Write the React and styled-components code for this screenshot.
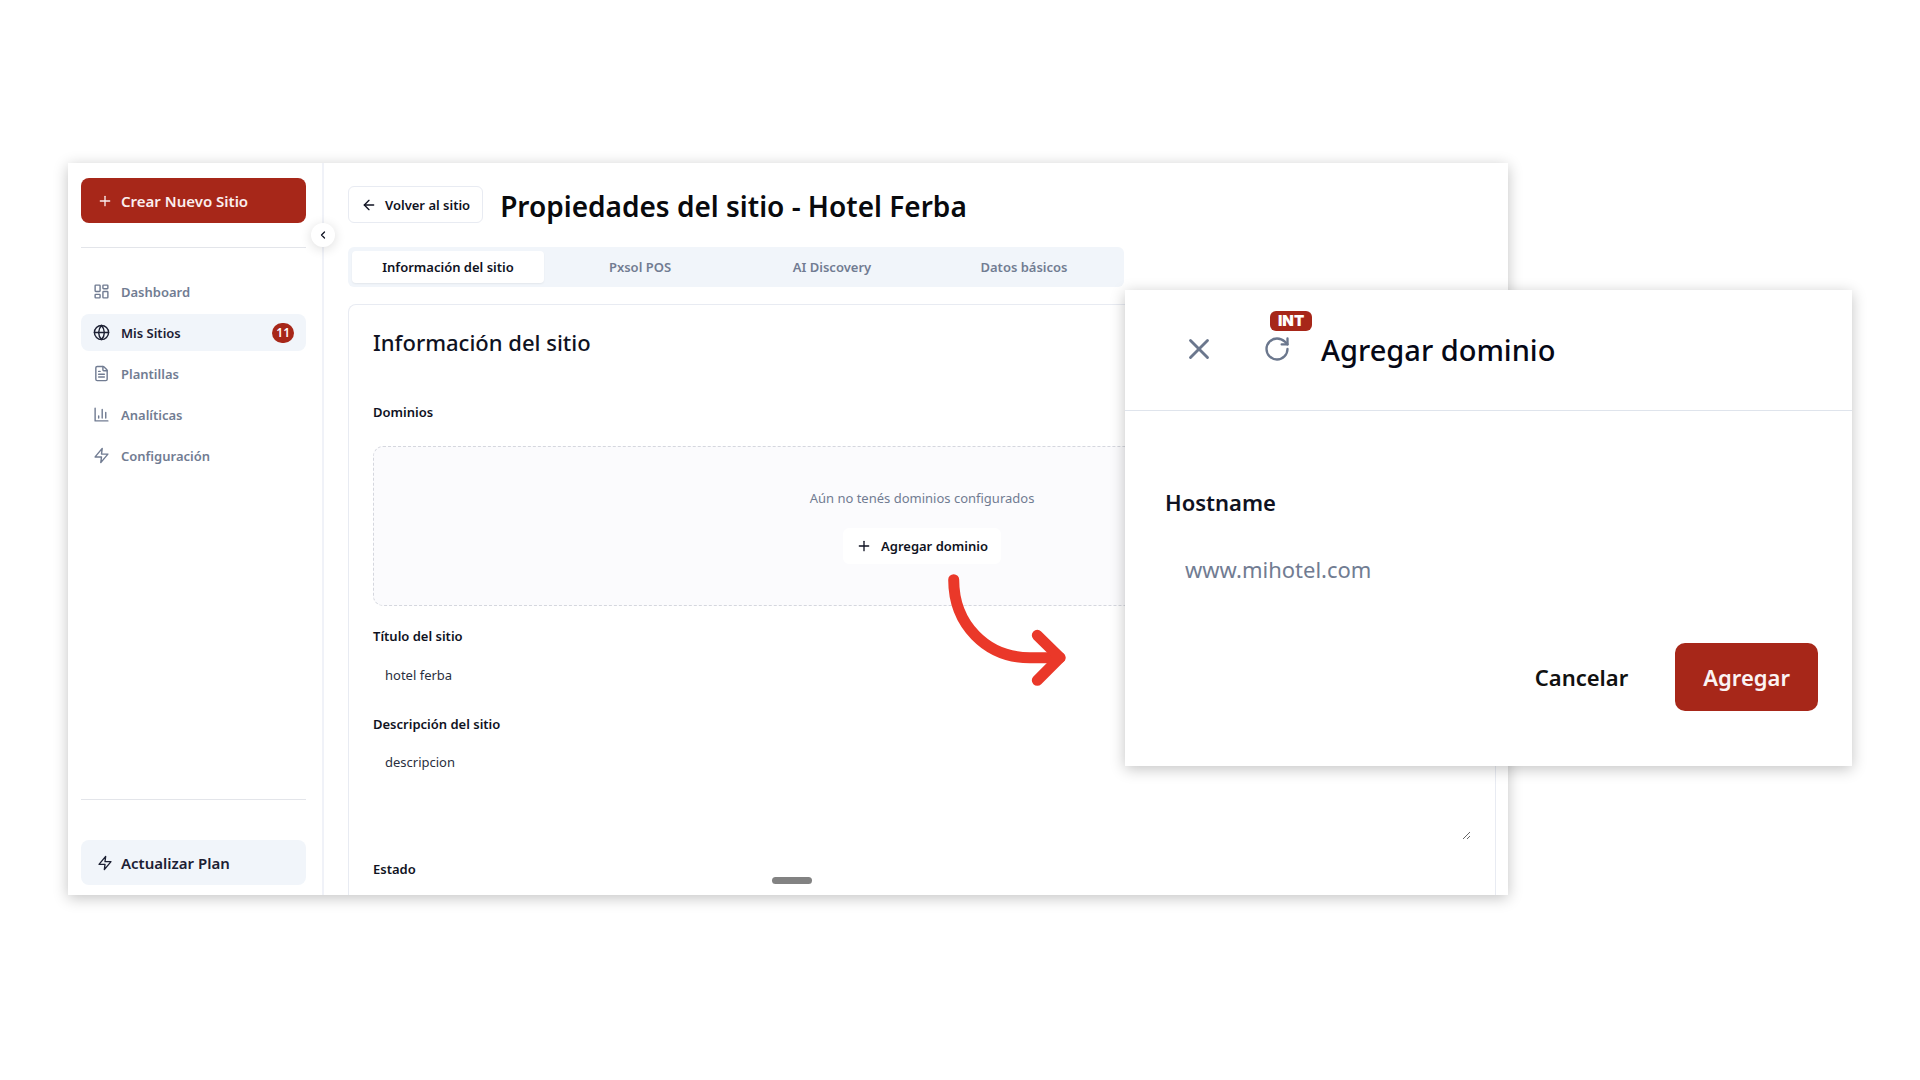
import React from "react";
import styled, { createGlobalStyle, css } from "styled-components";
import { ArrowLeft, ChevronLeft, FileText, Globe, LayoutDashboard, Plus, RotateCw, X } from "lucide-react";

const color = {
  brand: "#a72719",
  ink: "#0f1222",
  muted: "#717c92",
  soft: "#f1f5fa",
  line: "#e8ebf2",
  arrow: "#ea3829",
};

const GlobalStyle = createGlobalStyle`
  *, *::before, *::after { box-sizing: border-box; }
  body {
    margin: 0;
    background: #fff;
    color: ${color.ink};
    font: 400 13px/20px "Noto Sans", "Open Sans", sans-serif;
  }
  button, input, textarea { font: inherit; color: inherit; }
  button { cursor: pointer; }
`;

const Stage = styled.div`
  position: relative;
  min-height: 100vh;
  padding: 163px 68px;
`;

const floating = css`
  background: #fff;
  box-shadow: 0 3px 14px rgba(0, 0, 0, 0.24);
`;

const Window = styled.section`
  ${floating}
  position: relative;
  display: grid;
  grid-template-columns: 256px minmax(0, 1fr);
  width: 75vw;
  min-height: 732px;
`;

const Sidebar = styled.aside`
  position: relative;
  display: flex;
  flex-direction: column;
  padding: 15px 16px 10px 13px;
  border-right: 2px solid #f0f2f8;
`;

const SideButton = styled.button`
  display: flex;
  align-items: center;
  gap: 8px;
  height: 45px;
  padding: 0 16px;
  border: 0;
  border-radius: 8px;
  background: ${(p) => (p.$primary ? color.brand : color.soft)};
  color: ${(p) => (p.$primary ? "#fbeeee" : "#1c2033")};
  font-size: 15px;
  font-weight: 600;
`;

const Rule = styled.hr`
  width: 100%;
  margin: 0;
  border: 0;
  border-top: 1px solid #e3e5ea;
`;

const TopRule = styled(Rule)`
  margin: 24px 0 25px;
`;

const BottomRule = styled(Rule)`
  margin: auto 0 40px;
`;

const Nav = styled.nav`
  display: flex;
  flex-direction: column;
  gap: 4px;
`;

const NavLink = styled.a`
  display: flex;
  align-items: center;
  gap: 11px;
  height: 37px;
  padding: 0 12px;
  border-radius: 8px;
  background: ${(p) => (p.$active ? color.soft : "transparent")};
  color: ${(p) => (p.$active ? "#1c2033" : color.muted)};
  font-weight: 600;
  text-decoration: none;
`;

const Count = styled.span`
  margin-left: auto;
  padding: 0 4px;
  border-radius: 10px;
  background: ${color.brand};
  color: #fff;
  font-size: 12px;
`;

const Collapse = styled.button`
  position: absolute;
  top: 60px;
  right: -13px;
  display: grid;
  place-items: center;
  width: 24px;
  height: 24px;
  padding: 0;
  border: 0;
  border-radius: 50%;
  background: #fff;
  box-shadow: 0 2px 12px rgba(0, 0, 0, 0.14);
`;

const Main = styled.main`
  display: flex;
  flex-direction: column;
  padding: 23px 12px 0 24px;
`;

const PageHeader = styled.header`
  display: flex;
  align-items: center;
  gap: 17px;
`;

const BackButton = styled.button`
  display: flex;
  align-items: center;
  gap: 8px;
  height: 37px;
  padding: 0 12px;
  border: 1px solid ${color.line};
  border-radius: 6px;
  background: #fff;
  font-weight: 600;
`;

const PageTitle = styled.h1`
  margin: 0;
  padding-top: 4px;
  color: #090a0d;
  font-size: 28px;
  font-weight: 600;
  line-height: 33px;
`;

const Tabs = styled.div`
  display: grid;
  grid-template-columns: repeat(4, 1fr);
  width: 100%;
  max-width: 776px;
  margin: 24px 0 17px;
  padding: 4px;
  border-radius: 6px;
  background: ${color.soft};
`;

const Tab = styled.button`
  height: 32px;
  padding: 0;
  border: 0;
  border-radius: 4px;
  background: ${(p) => (p.$active ? "#fff" : "transparent")};
  box-shadow: ${(p) => (p.$active ? "0 1px 2px rgba(0, 0, 0, 0.06)" : "none")};
  color: ${(p) => (p.$active ? color.ink : color.muted)};
  font-weight: 600;
`;

const Card = styled.section`
  flex: 1;
  padding: 23px 24px 15px;
  border: 1px solid ${color.line};
  border-bottom: 0;
  border-radius: 8px 8px 0 0;
`;

const CardTitle = styled.h2`
  margin: 0 0 46px;
  font-size: 22px;
  font-weight: 500;
  line-height: 28px;
`;

const GroupTitle = styled.h3`
  margin: 0;
  font-size: 13px;
  font-weight: 600;
  line-height: 20px;
`;

const EmptyDomains = styled.div`
  display: flex;
  flex-direction: column;
  align-items: center;
  gap: 19px;
  margin: 24px 0 20px;
  padding: 41px;
  border: 1px dashed #d5d7de;
  border-radius: 10px;
  background: #fbfbfd;
`;

const EmptyText = styled.p`
  margin: 0;
  color: ${color.muted};
  line-height: 21px;
`;

const AddDomain = styled.div`
  position: relative;
`;

const AddButton = styled.button`
  display: flex;
  align-items: center;
  gap: 9px;
  height: 36px;
  padding: 0 13px;
  border: 0;
  border-radius: 6px;
  background: #fff;
  font-weight: 600;
`;

const Pointer = styled.svg`
  position: absolute;
  top: 46px;
  left: 105px;
  z-index: 1;
  pointer-events: none;
`;

const Field = styled.div`
  display: flex;
  flex-direction: column;
  gap: 9px;
  margin-bottom: 19px;
`;

const Label = styled.label`
  font-weight: 600;
`;

const TextInput = styled.input`
  height: 40px;
  padding: 0 12px;
  border: 0;
  background: #fff;
  color: #2a2f40;
`;

const TextArea = styled.textarea`
  height: 97px;
  padding: 9px 12px;
  border: 0;
  background: #fff;
  color: #2a2f40;
  resize: vertical;
`;

const DragHandle = styled.span`
  position: absolute;
  bottom: 11px;
  left: 50%;
  width: 40px;
  height: 7px;
  margin-left: -16px;
  border-radius: 4px;
  background: #828282;
`;

const Dialog = styled.section`
  ${floating}
  position: absolute;
  top: 290px;
  right: 68px;
  z-index: 2;
  width: 727px;
  max-width: calc(100vw - 136px);
`;

const DialogHeader = styled.header`
  display: flex;
  align-items: center;
  height: 121px;
  padding: 0 57px;
  border-bottom: 1px solid #dfe4ec;
`;

const IconButton = styled.button`
  position: relative;
  display: grid;
  place-items: center;
  width: 34px;
  height: 34px;
  margin: 0 ${(p) => p.$space} 3px 0;
  padding: 0;
  border: 0;
  background: transparent;
  color: #6b778d;
`;

const Tag = styled.span`
  position: absolute;
  top: -21px;
  left: 10px;
  padding: 0 8px;
  border-radius: 6px;
  background: ${color.brand};
  color: #fff;
  font-family: Inter, "Noto Sans", sans-serif;
  font-size: 15px;
  font-weight: 900;
`;

const DialogTitle = styled.h2`
  margin: 0;
  color: #060816;
  font-size: 29px;
  font-weight: 500;
  line-height: 40px;
`;

const DialogForm = styled.form`
  display: flex;
  flex-direction: column;
  padding: 75px 34px 55px 40px;
  font-size: 22px;
  line-height: 32px;
`;

const HostInput = styled.input`
  height: 56px;
  margin: 23px 0 46px;
  padding: 0 20px;
  border: 0;
  background: #fff;
  &::placeholder { color: ${color.muted}; opacity: 1; }
`;

const Actions = styled.div`
  display: flex;
  justify-content: flex-end;
  gap: 19px;
`;

const DialogButton = styled.button`
  height: 68px;
  padding: 0 28px;
  border: 0;
  border-radius: 10px;
  background: ${(p) => (p.$primary ? color.brand : "transparent")};
  color: ${(p) => (p.$primary ? "#fbf3f3" : "#111")};
  font-weight: 600;
`;

const Stroke = styled.svg.attrs({ viewBox: "0 0 24 24", fill: "none", "aria-hidden": true })`
  width: ${(p) => p.$size}px;
  height: ${(p) => p.$size}px;
  stroke: currentColor;
  stroke-width: 2;
  stroke-linecap: round;
  stroke-linejoin: round;
`;

const Bolt = ({ size }) => (
  <Stroke $size={size}>
    <polygon points="13 2 3 14 12 14 11 22 21 10 12 10 13 2" />
  </Stroke>
);

const Bars = ({ size }) => (
  <Stroke $size={size}>
    <path d="M3 3v18h18M18 17V9M13 17V5M8 17v-3" />
  </Stroke>
);

const navItems = [
  { label: "Dashboard", Icon: LayoutDashboard },
  { label: "Mis Sitios", Icon: Globe, count: 11 },
  { label: "Plantillas", Icon: FileText },
  { label: "Analíticas", Icon: Bars },
  { label: "Configuración", Icon: Bolt },
];

const tabs = ["Información del sitio", "Pxsol POS", "AI Discovery", "Datos básicos"];

export default function App() {
  return (
    <Stage>
      <GlobalStyle />
      <Window>
        <Sidebar>
          <SideButton $primary type="button">
            <Plus size={16} strokeWidth={2} />
            Crear Nuevo Sitio
          </SideButton>
          <TopRule />
          <Nav>
            {navItems.map(({ label, Icon, count }) => (
              <NavLink key={label} href="#" $active={Boolean(count)}>
                <Icon size={17} strokeWidth={2} />
                {label}
                {count && <Count>{count}</Count>}
              </NavLink>
            ))}
          </Nav>
          <BottomRule />
          <SideButton type="button">
            <Bolt size={16} />
            Actualizar Plan
          </SideButton>
          <Collapse type="button" aria-label="Contraer menú">
            <ChevronLeft size={12} strokeWidth={2.5} />
          </Collapse>
        </Sidebar>
        <Main>
          <PageHeader>
            <BackButton type="button">
              <ArrowLeft size={16} strokeWidth={2} />
              Volver al sitio
            </BackButton>
            <PageTitle>Propiedades del sitio - Hotel Ferba</PageTitle>
          </PageHeader>
          <Tabs role="tablist">
            {tabs.map((name, i) => (
              <Tab key={name} type="button" role="tab" aria-selected={i === 0} $active={i === 0}>
                {name}
              </Tab>
            ))}
          </Tabs>
          <Card>
            <CardTitle>Información del sitio</CardTitle>
            <GroupTitle>Dominios</GroupTitle>
            <EmptyDomains>
              <EmptyText>Aún no tenés dominios configurados</EmptyText>
              <AddDomain>
                <AddButton type="button">
                  <Plus size={16} strokeWidth={2} />
                  Agregar dominio
                </AddButton>
                <Pointer
                  width="120"
                  height="114"
                  viewBox="0 0 120 114"
                  fill="none"
                  stroke={color.arrow}
                  strokeWidth="11"
                  strokeLinecap="round"
                  strokeLinejoin="round"
                  aria-hidden="true"
                >
                  <path d="M5.7 5.7C5.7 50 38 83.7 82 83.7H112" />
                  <path d="M89.3 61.3L112 83.7L89.3 106.3" />
                </Pointer>
              </AddDomain>
            </EmptyDomains>
            <Field>
              <Label htmlFor="site-title">Título del sitio</Label>
              <TextInput id="site-title" defaultValue="hotel ferba" />
            </Field>
            <Field>
              <Label htmlFor="site-description">Descripción del sitio</Label>
              <TextArea id="site-description" defaultValue="descripcion" />
            </Field>
            <GroupTitle>Estado</GroupTitle>
          </Card>
        </Main>
        <DragHandle />
      </Window>
      <Dialog role="dialog" aria-labelledby="dialog-title">
        <DialogHeader>
          <IconButton type="button" aria-label="Cerrar" $space="44px">
            <X size={34} strokeWidth={2} />
          </IconButton>
          <IconButton type="button" aria-label="Recargar" $space="27px">
            <RotateCw size={28} strokeWidth={2} />
            <Tag>INT</Tag>
          </IconButton>
          <DialogTitle id="dialog-title">Agregar dominio</DialogTitle>
        </DialogHeader>
        <DialogForm onSubmit={(e) => e.preventDefault()}>
          <Label htmlFor="hostname">Hostname</Label>
          <HostInput id="hostname" placeholder="www.mihotel.com" />
          <Actions>
            <DialogButton type="button">Cancelar</DialogButton>
            <DialogButton $primary type="submit">Agregar</DialogButton>
          </Actions>
        </DialogForm>
      </Dialog>
    </Stage>
  );
}
